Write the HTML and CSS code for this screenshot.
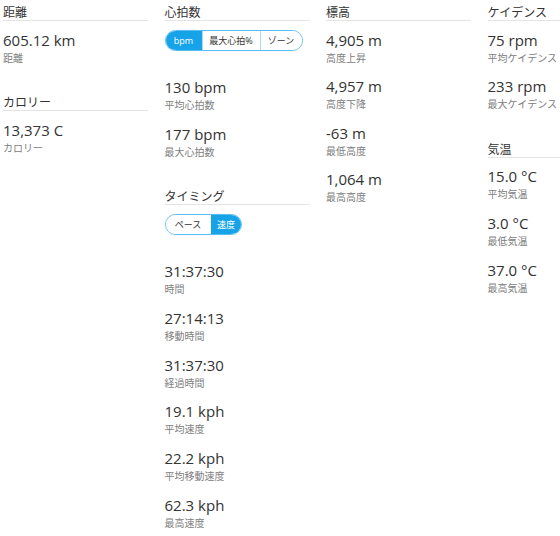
FILE: index.html
```html
<!DOCTYPE html>
<html lang="ja">
<head>
<meta charset="utf-8">
<title>Stats</title>
<link rel="stylesheet" href="styles.css">
</head>
<body>
<div class="dash">
  <div class="col">
    <section class="section">
      <h2 class="sec-title">距離</h2>
      <div class="stat"><div class="value">605.12 km</div><div class="label">距離</div></div>
    </section>
    <section class="section">
      <h2 class="sec-title">カロリー</h2>
      <div class="stat"><div class="value">13,373 C</div><div class="label">カロリー</div></div>
    </section>
  </div>
  <div class="col">
    <section class="section">
      <h2 class="sec-title">心拍数</h2>
      <div class="toggle">
        <span class="seg active seg-bpm">bpm</span>
        <span class="seg seg-max">最大心拍%</span>
        <span class="seg seg-zone">ゾーン</span>
      </div>
      <div class="stat"><div class="value">130 bpm</div><div class="label">平均心拍数</div></div>
      <div class="stat"><div class="value">177 bpm</div><div class="label">最大心拍数</div></div>
    </section>
    <section class="section">
      <h2 class="sec-title">タイミング</h2>
      <div class="toggle">
        <span class="seg seg-pace">ペース</span>
        <span class="seg active seg-speed">速度</span>
      </div>
      <div class="stat"><div class="value">31:37:30</div><div class="label">時間</div></div>
      <div class="stat"><div class="value">27:14:13</div><div class="label">移動時間</div></div>
      <div class="stat"><div class="value">31:37:30</div><div class="label">経過時間</div></div>
      <div class="stat"><div class="value">19.1 kph</div><div class="label">平均速度</div></div>
      <div class="stat"><div class="value">22.2 kph</div><div class="label">平均移動速度</div></div>
      <div class="stat"><div class="value">62.3 kph</div><div class="label">最高速度</div></div>
    </section>
  </div>
  <div class="col">
    <section class="section">
      <h2 class="sec-title">標高</h2>
      <div class="stat"><div class="value">4,905 m</div><div class="label">高度上昇</div></div>
      <div class="stat"><div class="value">4,957 m</div><div class="label">高度下降</div></div>
      <div class="stat"><div class="value">-63 m</div><div class="label">最低高度</div></div>
      <div class="stat"><div class="value">1,064 m</div><div class="label">最高高度</div></div>
    </section>
  </div>
  <div class="col">
    <section class="section">
      <h2 class="sec-title">ケイデンス</h2>
      <div class="stat"><div class="value">75 rpm</div><div class="label">平均ケイデンス</div></div>
      <div class="stat"><div class="value">233 rpm</div><div class="label">最大ケイデンス</div></div>
    </section>
    <section class="section">
      <h2 class="sec-title">気温</h2>
      <div class="stat"><div class="value">15.0 °C</div><div class="label">平均気温</div></div>
      <div class="stat"><div class="value">3.0 °C</div><div class="label">最低気温</div></div>
      <div class="stat"><div class="value">37.0 °C</div><div class="label">最高気温</div></div>
    </section>
  </div>
</div>
</body>
</html>
```

FILE: styles.css
```css
html, body {
  margin: 0;
  padding: 0;
  overflow: hidden;
  background: #ffffff;
}

body {
  font-family: "Open Sans", "Noto Sans CJK JP", sans-serif;
  color: #333333;
}

.dash {
  display: grid;
  grid-template-columns: repeat(3, 145px) 1fr;
  column-gap: 16.5px;
  width: 560px;
  box-sizing: border-box;
  padding: 5px 0 0 3px;
  align-items: start;
}

.col {
  min-width: 0;
}

.section + .section {
  margin-top: 19px;
}

.sec-title {
  margin: 0 0 8.5px;
  font-size: 12px;
  font-weight: normal;
  line-height: 15px;
  color: #333333;
  border-bottom: 1px solid #e4e4e4;
}

.stat {
  padding-bottom: 11.67px;
}

.value {
  font-size: 15px;
  line-height: 20px;
  color: #333333;
}

.label {
  margin-top: 1px;
  font-size: 10px;
  line-height: 14px;
  color: #808080;
  white-space: nowrap;
}

.toggle {
  display: inline-flex;
  height: 21px;
  box-sizing: border-box;
  border: 1.5px solid #5cbcef;
  border-radius: 11px;
  overflow: hidden;
  margin-bottom: 26.5px;
  vertical-align: top;
}

.seg {
  display: flex;
  align-items: center;
  justify-content: center;
  font-size: 9px;
  color: #333333;
  background: #ffffff;
}

.seg + .seg {
  border-left: 1px solid #a9dbf5;
}

.seg.active {
  background: #17a3e7;
  color: #ffffff;
  border-left-color: #17a3e7;
}

.seg-bpm { width: 36px; }
.seg-max { width: 57px; }
.seg-zone { width: 41px; }
.seg-pace { width: 45px; }
.seg-speed { width: 29px; }
```
